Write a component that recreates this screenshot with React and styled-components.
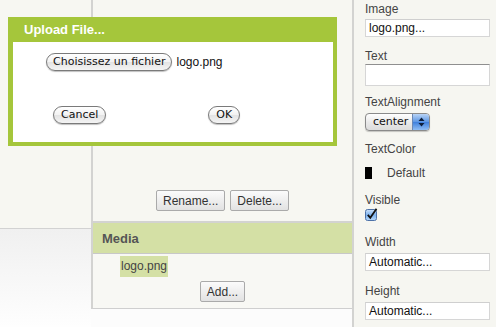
import React from 'react'
import styled, { createGlobalStyle } from 'styled-components'

const Global = createGlobalStyle`
  html, body { margin: 0; padding: 0; background: #fff; }
  body { font-family: "Liberation Sans", Arial, sans-serif; font-size: 12px; color: #333; }
`

const Page = styled.div`
  position: relative;
  display: flex;
  width: 496px;
  height: 327px;
  overflow: hidden;
`

const LeftCol = styled.div`
  width: 91px;
  display: flex;
  flex-direction: column;
`
const LeftTop = styled.div`
  height: 228px;
  background: #f7f7f2;
  border-bottom: 1px solid #d2d2d2;
`
const LeftBottom = styled.div`
  flex: 1;
  background: linear-gradient(#f0f0f0, #fefefe);
`

const MiddleCol = styled.div`
  width: 261px;
  display: flex;
  flex-direction: column;
  border-right: 2px solid #d3d3d1;
`
const Viewer = styled.div`
  height: 223px;
  background: #f7f7f2;
  border-left: 2px solid #d3d3d1;
  border-bottom: 2px solid #d3d3d1;
  display: flex;
  align-items: flex-end;
  justify-content: center;
  gap: 5px;
  padding-bottom: 10px;
  box-sizing: border-box;
`
const GrayButton = styled.button`
  height: 21px;
  padding: 0 6px;
  font-family: "Liberation Sans", Arial, sans-serif;
  font-size: 12px;
  color: #333;
  border: 1px solid #aaa;
  border-radius: 2px;
  background: linear-gradient(#fbfbfb, #e2e2e2);
  margin: 0;
`
const MediaPanel = styled.div`
  border-left: 2px solid #d3d3d1;
  border-bottom: 1px solid #cfcfcf;
  background: #f8f8f4;
`
const MediaHeader = styled.div`
  height: 30px;
  background: #d4e0a5;
  border-bottom: 1px solid #c8c8c8;
  font-weight: bold;
  font-size: 13px;
  color: #555;
  padding-left: 9px;
  line-height: 32px;
`
const MediaBody = styled.div`
  height: 54px;
  display: flex;
  flex-direction: column;
`
const MediaItem = styled.span`
  align-self: flex-start;
  margin: 2px 0 0 27px;
  background: #d4e0a5;
  color: #444;
  font-size: 12px;
  line-height: 21px;
  padding: 0 1px;
`
const AddRow = styled.div`
  display: flex;
  justify-content: center;
  margin-top: 4px;
`
const MiddleFill = styled.div`
  flex: 1;
  background: #fcfcfc;
`

const RightCol = styled.div`
  flex: 1;
  background: #f6f6f1;
  padding-left: 11px;
  box-sizing: border-box;
`
const Prop = styled.div`
  margin-top: ${p => p.$top}px;
`
const Label = styled.div`
  font-size: 12px;
  line-height: 14px;
  color: #444;
  margin-bottom: ${p => p.$gap}px;
`
const TextBox = styled.div`
  width: 125px;
  height: ${p => p.$h}px;
  box-sizing: border-box;
  background: #fff;
  border: 1px solid #d6d6d6;
  border-top-color: ${p => (p.$dark ? '#8f8f8f' : '#cfcfcf')};
  font-size: 12px;
  color: #111;
  padding-left: 3px;
  line-height: ${p => p.$h - 2}px;
`
const Select = styled.div`
  width: 65px;
  height: 18px;
  box-sizing: border-box;
  display: flex;
  border: 1px solid #8a8a8a;
  border-radius: 4px;
  overflow: hidden;
  background: linear-gradient(#ffffff, #e8e8e8 55%, #dcdcdc);
  box-shadow: 0 1px 1px rgba(0, 0, 0, 0.2);
`
const SelectText = styled.span`
  flex: 1;
  font-family: "DejaVu Sans", sans-serif;
  font-size: 11px;
  line-height: 16px;
  padding-left: 7px;
  color: #111;
`
const SelectArrow = styled.span`
  width: 16px;
  display: flex;
  align-items: center;
  justify-content: center;
  background: linear-gradient(#b9d4f6, #5b95e3 50%, #3e7fdc 51%, #8fbdf4);
  border-left: 1px solid #6b88b5;
`
const ColorRow = styled.div`
  display: flex;
  align-items: center;
  gap: 15px;
  font-size: 12px;
  color: #444;
`
const Swatch = styled.span`
  width: 7px;
  height: 12px;
  background: #000;
`

const Overlay = styled.div`
  position: absolute;
  left: 8px;
  top: 17px;
  width: 329px;
  height: 129px;
  box-sizing: border-box;
  background: #a5c63b;
  border: 4px solid #a5c63b;
  border-left-width: 5px;
  border-top: 0;
  display: flex;
  flex-direction: column;
`
const DialogTitle = styled.div`
  height: 25px;
  color: #fff;
  font-weight: bold;
  font-size: 13px;
  line-height: 25px;
  padding-left: 11px;
`
const DialogBody = styled.div`
  flex: 1;
  background: #fff;
  display: flex;
  flex-direction: column;
`
const FileRow = styled.div`
  display: flex;
  align-items: center;
  gap: 4px;
  margin: 11px 0 0 33px;
  font-size: 12px;
  color: #111;
`
const ButtonRow = styled.div`
  display: flex;
  margin: 35px 0 0 40px;
  gap: ${p => p.$gap}px;
`
const Pill = styled.button`
  height: 18px;
  padding: 0 ${p => p.$pad ?? 7}px;
  margin: 0;
  border: 1px solid #7a7a7a;
  border-radius: 9px;
  background: linear-gradient(#ffffff, #f2f2f2 50%, #e3e3e3 51%, #f4f4f4);
  box-shadow: 0 1px 1px rgba(0, 0, 0, 0.25);
  font-family: "DejaVu Sans", sans-serif;
  font-size: 11px;
  line-height: 16px;
  color: #111;
`

const Checkbox = () => (
  <svg width="13" height="13" viewBox="0 0 13 13">
    <defs>
      <linearGradient id="cb" x1="0" y1="0" x2="0" y2="1">
        <stop offset="0" stopColor="#cfe3fb" />
        <stop offset="0.5" stopColor="#7db3ef" />
        <stop offset="1" stopColor="#b6d8fb" />
      </linearGradient>
    </defs>
    <rect x="0.5" y="1.5" width="11" height="11" rx="2" fill="url(#cb)" stroke="#4e72a8" />
    <path d="M2.8 6.8 L5.3 9.8 L11.5 0.8" fill="none" stroke="#111" strokeWidth="1.8" />
  </svg>
)

const Arrows = () => (
  <svg width="7" height="10" viewBox="0 0 7 10">
    <path d="M3.5 0.5 L6.5 4 L0.5 4 Z M0.5 6 L6.5 6 L3.5 9.5 Z" fill="#0d1f3c" />
  </svg>
)

export default function App() {
  return (
    <>
      <Global />
      <Page>
        <LeftCol>
          <LeftTop />
          <LeftBottom />
        </LeftCol>
        <MiddleCol>
          <Viewer>
            <GrayButton>Rename...</GrayButton>
            <GrayButton>Delete...</GrayButton>
          </Viewer>
          <MediaPanel>
            <MediaHeader>Media</MediaHeader>
            <MediaBody>
              <MediaItem>logo.png</MediaItem>
              <AddRow>
                <GrayButton>Add...</GrayButton>
              </AddRow>
            </MediaBody>
          </MediaPanel>
          <MiddleFill />
        </MiddleCol>
        <RightCol>
          <Prop $top={2}>
            <Label $gap={3}>Image</Label>
            <TextBox $h={18}>logo.png...</TextBox>
          </Prop>
          <Prop $top={12}>
            <Label $gap={1}>Text</Label>
            <TextBox $h={22} $dark />
          </Prop>
          <Prop $top={9}>
            <Label $gap={4}>TextAlignment</Label>
            <Select>
              <SelectText>center</SelectText>
              <SelectArrow><Arrows /></SelectArrow>
            </Select>
          </Prop>
          <Prop $top={11}>
            <Label $gap={10}>TextColor</Label>
            <ColorRow>
              <Swatch />
              Default
            </ColorRow>
          </Prop>
          <Prop $top={13}>
            <Label $gap={1}>Visible</Label>
            <Checkbox />
          </Prop>
          <Prop $top={11}>
            <Label $gap={4}>Width</Label>
            <TextBox $h={18}>Automatic...</TextBox>
          </Prop>
          <Prop $top={13}>
            <Label $gap={4}>Height</Label>
            <TextBox $h={18}>Automatic...</TextBox>
          </Prop>
        </RightCol>
        <Overlay>
          <DialogTitle>Upload File...</DialogTitle>
          <DialogBody>
            <FileRow>
              <Pill $pad={6}>Choisissez un fichier</Pill>
              logo.png
            </FileRow>
            <ButtonRow $gap={102}>
              <Pill>Cancel</Pill>
              <Pill>OK</Pill>
            </ButtonRow>
          </DialogBody>
        </Overlay>
      </Page>
    </>
  )
}
